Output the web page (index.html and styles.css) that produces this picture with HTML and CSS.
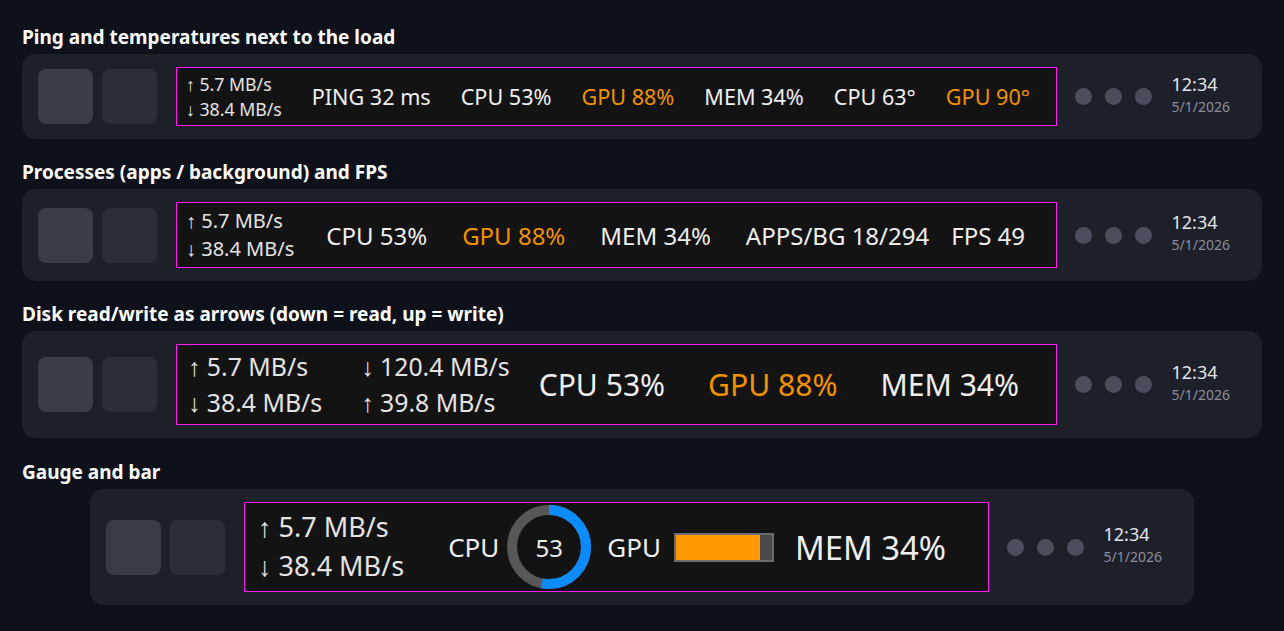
FILE: index.html
```html
<!DOCTYPE html>
<html lang="en">
<head>
<meta charset="utf-8">
<title>Taskbar widget variants</title>
<link rel="stylesheet" href="styles.css">
</head>
<body>
<main class="page">

  <section class="demo">
    <h2 class="title">Ping and temperatures next to the load</h2>
    <div class="panel">
      <div class="tile tile-a"></div>
      <div class="tile tile-b"></div>
      <div class="widget w1">
        <div class="net">
          <div><span class="arr">↑</span> 5.7 MB/s</div>
          <div><span class="arr">↓</span> 38.4 MB/s</div>
        </div>
        <span class="m">PING 32 ms</span>
        <span class="m">CPU 53%</span>
        <span class="m hot">GPU 88%</span>
        <span class="m">MEM 34%</span>
        <span class="m">CPU 63°</span>
        <span class="m hot">GPU 90°</span>
      </div>
      <div class="dots"><i></i><i></i><i></i></div>
      <div class="clock"><div class="time">12:34</div><div class="date">5/1/2026</div></div>
    </div>
  </section>

  <section class="demo">
    <h2 class="title">Processes (apps / background) and FPS</h2>
    <div class="panel">
      <div class="tile tile-a"></div>
      <div class="tile tile-b"></div>
      <div class="widget w2">
        <div class="net">
          <div><span class="arr">↑</span> 5.7 MB/s</div>
          <div><span class="arr">↓</span> 38.4 MB/s</div>
        </div>
        <span class="m">CPU 53%</span>
        <span class="m hot">GPU 88%</span>
        <span class="m">MEM 34%</span>
        <span class="m">APPS/BG 18/294</span>
        <span class="m fps">FPS 49</span>
      </div>
      <div class="dots"><i></i><i></i><i></i></div>
      <div class="clock"><div class="time">12:34</div><div class="date">5/1/2026</div></div>
    </div>
  </section>

  <section class="demo">
    <h2 class="title">Disk read/write as arrows (down = read, up = write)</h2>
    <div class="panel">
      <div class="tile tile-a"></div>
      <div class="tile tile-b"></div>
      <div class="widget w3">
        <div class="net">
          <div><span class="arr">↑</span> 5.7 MB/s</div>
          <div><span class="arr">↓</span> 38.4 MB/s</div>
        </div>
        <div class="net disk">
          <div><span class="arr">↓</span> 120.4 MB/s</div>
          <div><span class="arr">↑</span> 39.8 MB/s</div>
        </div>
        <span class="m cpu">CPU 53%</span>
        <span class="m hot">GPU 88%</span>
        <span class="m">MEM 34%</span>
      </div>
      <div class="dots"><i></i><i></i><i></i></div>
      <div class="clock"><div class="time">12:34</div><div class="date">5/1/2026</div></div>
    </div>
  </section>

  <section class="demo demo-last">
    <h2 class="title">Gauge and bar</h2>
    <div class="panel panel-narrow">
      <div class="tile tile-a"></div>
      <div class="tile tile-b"></div>
      <div class="widget w4">
        <div class="net">
          <div><span class="arr">↑</span> 5.7 MB/s</div>
          <div><span class="arr">↓</span> 38.4 MB/s</div>
        </div>
        <div class="group cpu-group">
          <span class="lbl">CPU</span>
          <div class="gauge">
            <svg width="84" height="84" viewBox="0 0 84 84">
              <circle cx="42" cy="42" r="37" fill="none" stroke="#575757" stroke-width="10"/>
              <circle cx="42" cy="42" r="37" fill="none" stroke="#0a8cff" stroke-width="10"
                      stroke-dasharray="123.2 232.5" transform="rotate(-90 42 42)"/>
            </svg>
            <span class="gauge-val">53</span>
          </div>
        </div>
        <div class="group gpu-group">
          <span class="lbl">GPU</span>
          <div class="meter"><div class="meter-fill" style="width: 88%"></div></div>
        </div>
        <span class="m mem">MEM 34%</span>
      </div>
      <div class="dots"><i></i><i></i><i></i></div>
      <div class="clock"><div class="time">12:34</div><div class="date">5/1/2026</div></div>
    </div>
  </section>

</main>
</body>
</html>
```

FILE: styles.css
```css
* { box-sizing: border-box; }

html, body {
  margin: 0;
  padding: 0;
  background: #0e1119;
}

body {
  font-family: "Noto Sans", "Open Sans", sans-serif;
  color: #ededed;
}

.page {
  padding: 26px 22px 0 22px;
  display: flex;
  flex-direction: column;
  gap: 22px;
}

.demo {
  display: flex;
  flex-direction: column;
}
.demo-last { margin-top: 1px; }

.title {
  margin: 0 0 6px 0;
  font-size: 19px;
  line-height: 22px;
  font-weight: 700;
  color: #ffffff;
}

.panel {
  display: flex;
  align-items: center;
  background: #1e2029;
  border-radius: 14px;
  padding: 13px 32px 13px 16px;
}

.panel-narrow {
  width: 1104px;
  align-self: center;
}

.tile {
  width: 55px;
  height: 55px;
  border-radius: 8px;
  flex: none;
}
.tile-a { background: #393b48; }
.tile-b { background: #2b2d38; margin-left: 9px; }

.widget {
  flex: 1;
  display: flex;
  align-items: center;
  background: #131313;
  border: 1px solid #ff1cf4;
  margin: 0 18px 0 19px;
  white-space: nowrap;
}

.arr {
  font-family: "Liberation Sans", Arial, sans-serif;
}

.net { color: #e4e4e4; }
.m { color: #efefef; }
.hot { color: #f29200; }

/* Row 1 */
.w1 {
  height: 59px;
  padding-left: 9px;
  gap: 30px;
}
.w1 .net { font-size: 17.7px; line-height: 24px; }
.w1 .m { font-size: 21.6px; }

/* Row 2 */
.w2 {
  height: 66px;
  padding-left: 9px;
  gap: 35px;
}
.w2 .net { font-size: 20px; line-height: 28px; margin-right: -3px; }
.w2 .m { font-size: 24px; }
.w2 .fps { margin-left: -13px; }

/* Row 3 */
.w3 {
  height: 81px;
  padding-left: 11px;
  gap: 43px;
}
.w3 .net { font-size: 24.8px; line-height: 34px; }
.w3 .disk { margin-left: -4px; }
.w3 .m { font-size: 30.1px; }
.w3 .cpu { margin-left: -14px; }

/* Row 4 */
.w4 {
  height: 90px;
  padding-left: 13px;
}
.w4 .net { font-size: 27px; line-height: 38px; }

.group {
  display: flex;
  align-items: center;
}
.lbl { font-size: 26px; color: #efefef; }

.cpu-group { margin-left: 44px; gap: 8px; }
.gpu-group { margin-left: 16px; gap: 13px; }
.w4 .mem { font-size: 32.8px; margin-left: 21px; }

.gauge {
  position: relative;
  width: 84px;
  height: 84px;
}
.gauge svg { display: block; }
.gauge-val {
  position: absolute;
  inset: 0;
  display: flex;
  align-items: center;
  justify-content: center;
  font-size: 24px;
  color: #ececec;
}

.meter {
  width: 100px;
  height: 29px;
  border: 2px solid #6b6b6b;
  background: #4a4a4a;
}
.meter-fill {
  height: 100%;
  background: #ff9900;
}

.dots {
  display: flex;
  gap: 13px;
  flex: none;
}
.dots i {
  display: block;
  width: 17px;
  height: 17px;
  border-radius: 50%;
  background: #4b4d5d;
}

.clock {
  margin-left: 20px;
  padding-bottom: 4px;
  flex: none;
}
.time {
  font-size: 18px;
  line-height: 22px;
  color: #e2e2e7;
}
.date {
  margin-top: 2px;
  font-size: 14px;
  line-height: 20px;
  color: #8c8e9a;
}
```
